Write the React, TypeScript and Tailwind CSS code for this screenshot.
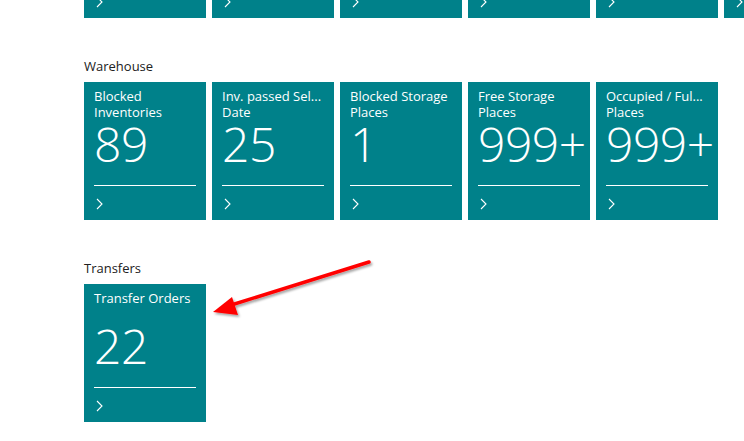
import React from 'react';

interface Cue {
  lines: string[];
  value: string;
}

const warehouse: Cue[] = [
  { lines: ['Blocked', 'Inventories'], value: '89' },
  { lines: ['Inv. passed Sel...', 'Date'], value: '25' },
  { lines: ['Blocked Storage', 'Places'], value: '1' },
  { lines: ['Free Storage', 'Places'], value: '999+' },
  { lines: ['Occupied / Ful...', 'Places'], value: '999+' },
];

const transfers: Cue[] = [{ lines: ['Transfer Orders'], value: '22' }];

const Chevron = () => (
  <svg width="7" height="12" viewBox="0 0 7 12" fill="none" className="mt-[12px] ml-[2px]">
    <path d="M1 1 L6 6 L1 11" stroke="white" strokeWidth="1.1" />
  </svg>
);

const Tile: React.FC<{ cue: Cue }> = ({ cue }) => (
  <div className="w-[122px] h-[138px] shrink-0 bg-[#00818a] text-white flex flex-col pt-[6px] px-[10px]">
    <div className="h-[32px] text-[13px] leading-[16px]">
      {cue.lines.map((l, i) => (
        <div key={i} className="whitespace-nowrap">{l}</div>
      ))}
    </div>
    <div className="h-[48px] text-[48px] leading-[48px] font-light whitespace-nowrap tracking-[-0.5px]">{cue.value}</div>
    <div className="mt-[17px] border-t border-white" />
    <Chevron />
  </div>
);

const Section: React.FC<{ title: string; cues: Cue[] }> = ({ title, cues }) => (
  <div className="mt-[40px]">
    <div className="text-[13px] leading-[16px] text-[#212121] h-[16px] mb-[8px]">{title}</div>
    <div className="flex gap-[6px]">
      {cues.map((c, i) => (
        <Tile key={i} cue={c} />
      ))}
    </div>
  </div>
);

export default function App() {
  const blank: Cue = { lines: [''], value: '' };
  return (
    <div
      className="relative w-[744px] h-[441px] overflow-hidden bg-white pl-[84px]"
      style={{ fontFamily: '"Open Sans", "Noto Sans", sans-serif' }}
    >
      {/* previous group, scrolled mostly out of view */}
      <div className="flex gap-[6px] -mt-[120px]">
        {[0, 1, 2, 3, 4, 5].map((i) => (
          <Tile key={i} cue={blank} />
        ))}
      </div>

      <Section title="Warehouse" cues={warehouse} />
      <Section title="Transfers" cues={transfers} />

      {/* red annotation arrow */}
      <svg className="absolute left-0 top-0 pointer-events-none" width="744" height="441" viewBox="0 0 744 441">
        <defs>
          <filter id="sh" x="-20%" y="-50%" width="140%" height="200%">
            <feDropShadow dx="1.5" dy="2" stdDeviation="1.2" floodColor="#000" floodOpacity="0.35" />
          </filter>
        </defs>
        <g filter="url(#sh)">
          <line x1="369" y1="262" x2="228" y2="306" stroke="#ff0000" strokeWidth="3.5" strokeLinecap="round" />
          <polygon points="213,312 232,297 238,315" fill="#ff0000" />
        </g>
      </svg>
    </div>
  );
}
